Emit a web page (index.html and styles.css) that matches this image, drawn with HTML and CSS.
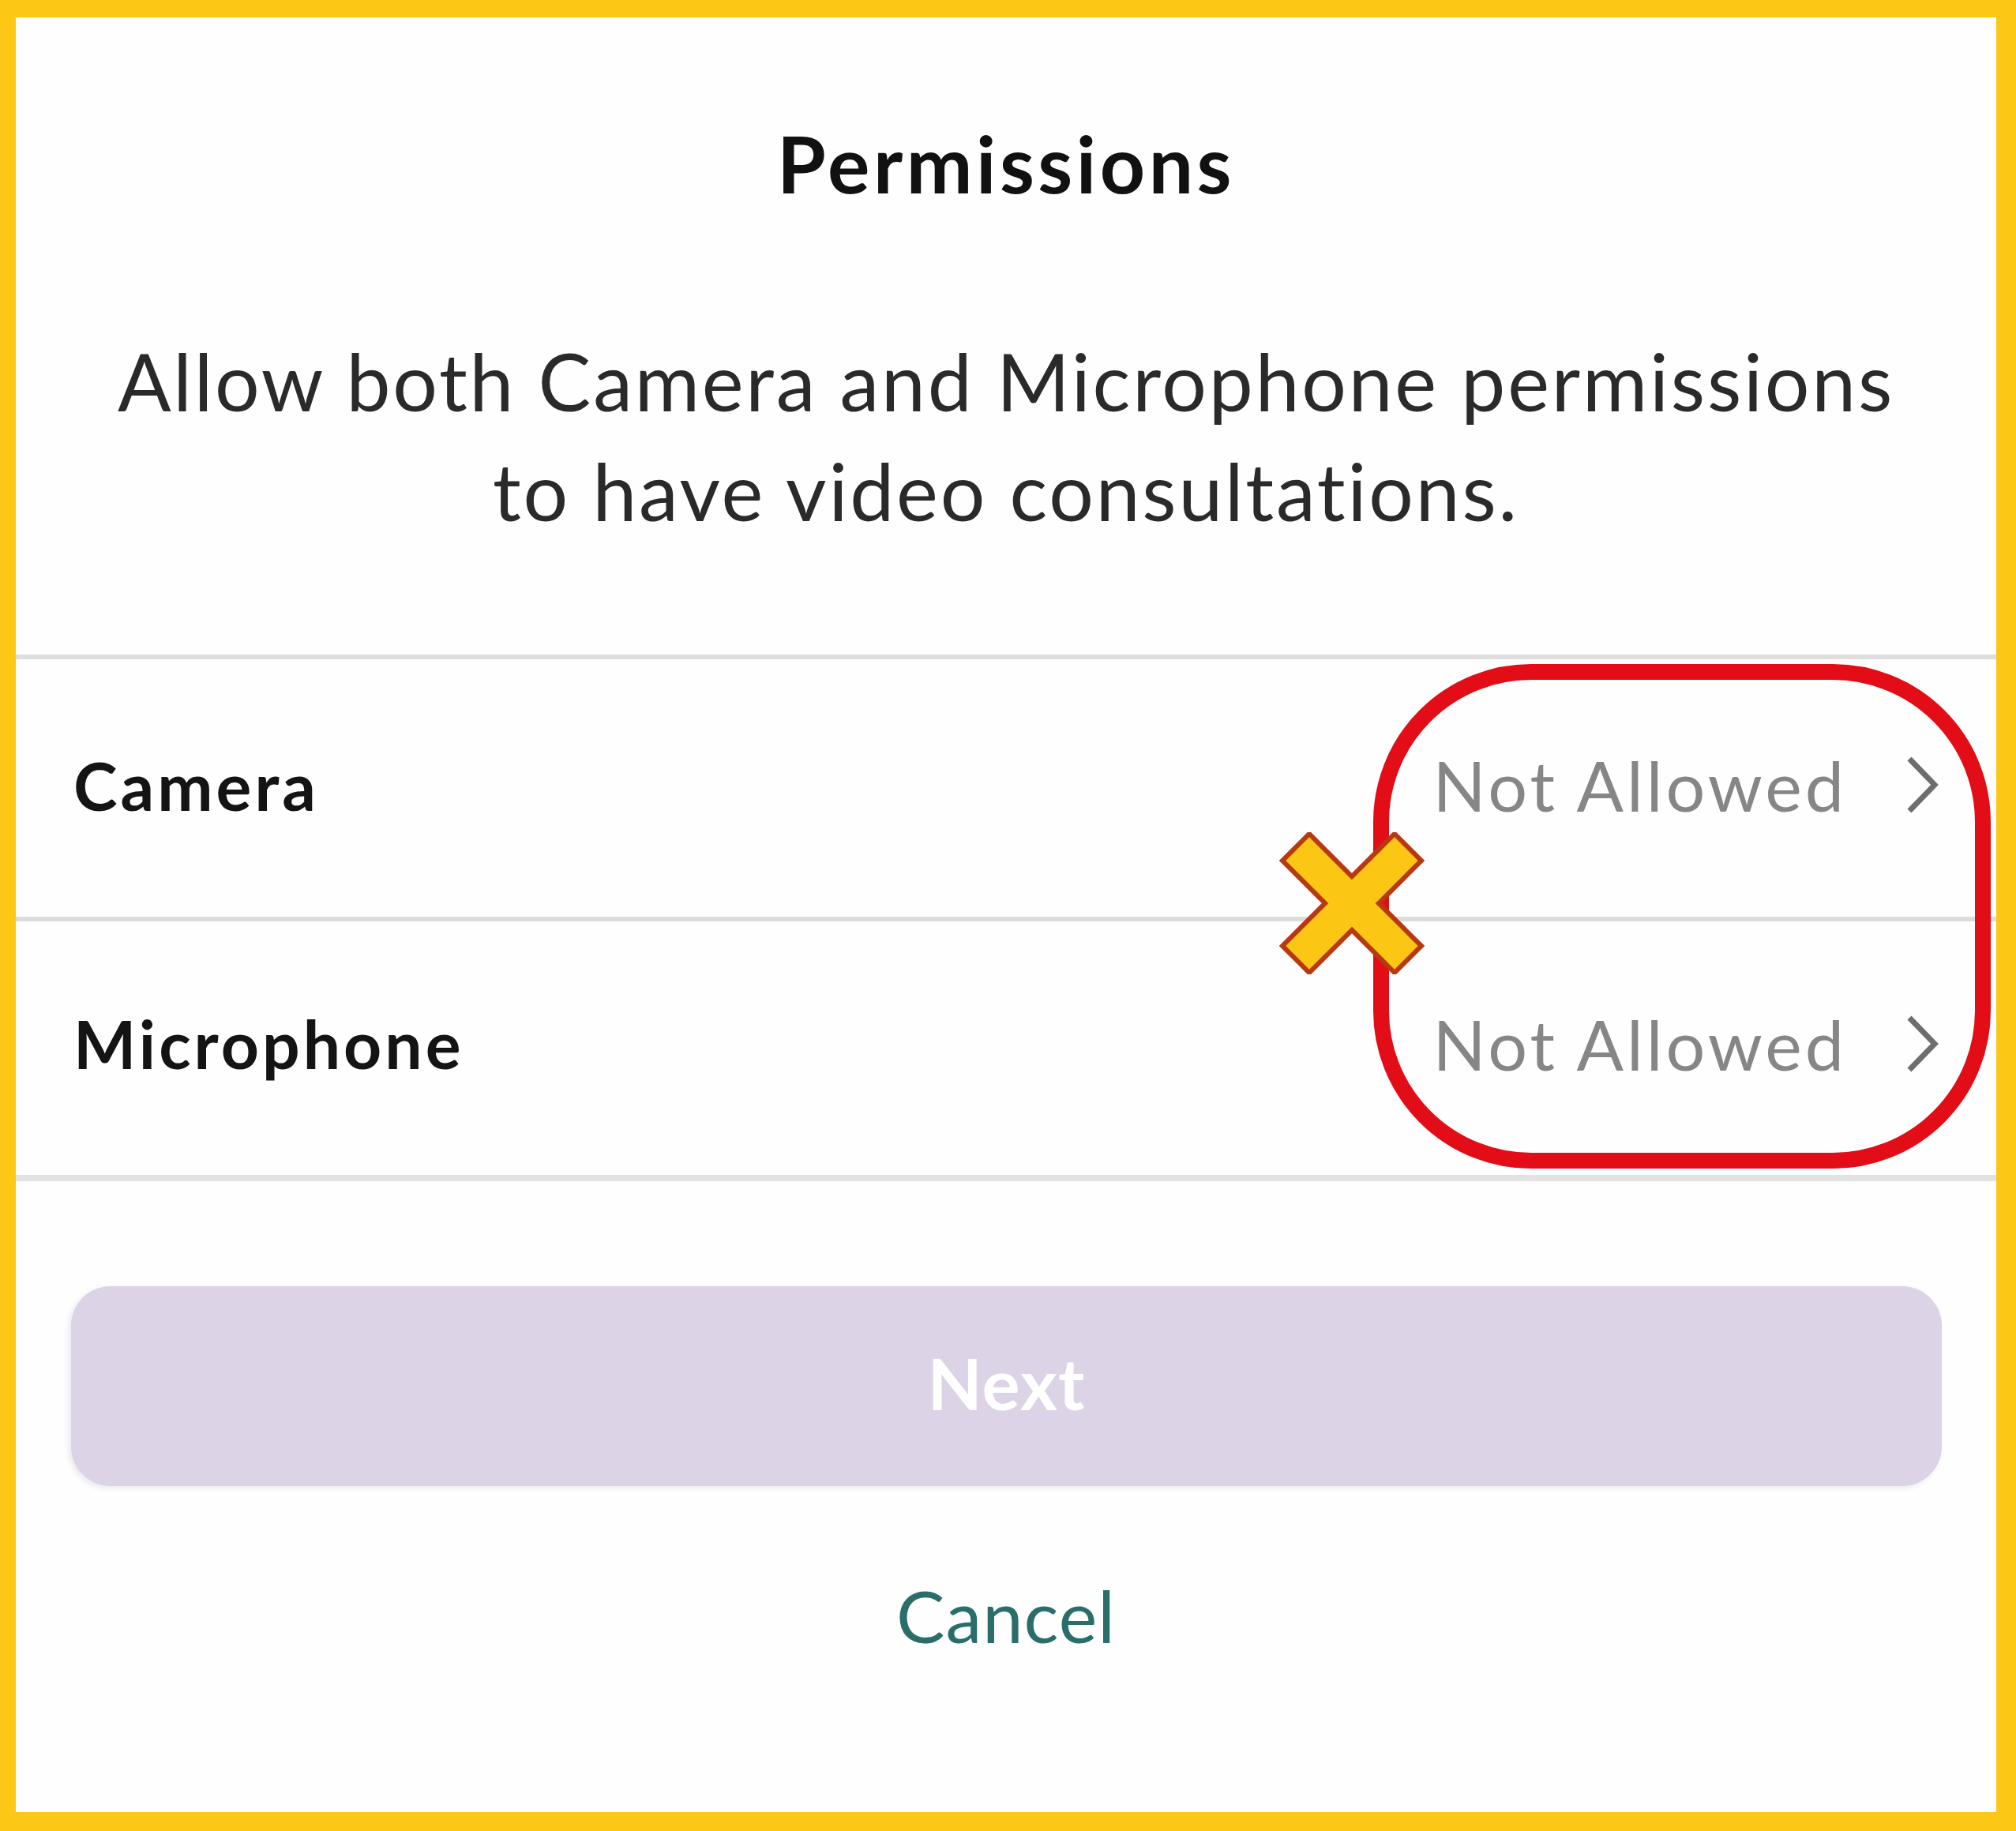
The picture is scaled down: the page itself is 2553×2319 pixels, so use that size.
FILE: index.html
```html
<!DOCTYPE html>
<html lang="en">
<head>
<meta charset="utf-8">
<title>Permissions</title>
<link rel="stylesheet" href="styles.css">
</head>
<body>
<div class="frame">
  <div class="card">
    <h1 class="title">Permissions</h1>
    <p class="desc">Allow both Camera and Microphone permissions<br>to have video consultations.</p>
    <div class="list">
      <div class="row">
        <span class="label">Camera</span>
        <span class="status">Not Allowed
          <svg class="chev" viewBox="0 0 42 76" width="42" height="76"><path d="M5 5 L37 38 L5 71" fill="none" stroke="#6e6e6e" stroke-width="7"/></svg>
        </span>
      </div>
      <div class="row">
        <span class="label">Microphone</span>
        <span class="status">Not Allowed
          <svg class="chev" viewBox="0 0 42 76" width="42" height="76"><path d="M5 5 L37 38 L5 71" fill="none" stroke="#6e6e6e" stroke-width="7"/></svg>
        </span>
      </div>
      <div class="highlight"></div>
      <svg class="xmark" viewBox="0 0 184 180" width="184" height="180">
        <path d="M38 36 L146 144 M146 36 L38 144" stroke="#b8380f" stroke-width="54" stroke-linecap="square" fill="none"/>
        <path d="M38 36 L146 144 M146 36 L38 144" stroke="#fcc614" stroke-width="42" stroke-linecap="square" fill="none"/>
      </svg>
    </div>
    <button class="next" type="button">Next</button>
    <div class="cancel">Cancel</div>
  </div>
</div>
</body>
</html>
```
FILE: styles.css
```css
html, body {
  margin: 0;
  padding: 0;
}
body {
  width: 2553px;
  height: 2319px;
  background: #fcc815;
  font-family: Lato, "Open Sans", sans-serif;
}
.frame {
  box-sizing: border-box;
  width: 2553px;
  height: 2319px;
  border-style: solid;
  border-color: #fcc815;
  border-width: 22px 25px 24px 20px;
  background: #fefefe;
}
.card {
  display: flex;
  flex-direction: column;
  align-items: stretch;
}
.title {
  margin: 124px 0 0;
  text-align: center;
  font-size: 100px;
  line-height: 120px;
  font-weight: 700;
  letter-spacing: 4.5px;
  color: #111;
}
.desc {
  margin: 147px 0 0;
  text-align: center;
  font-size: 100px;
  line-height: 139px;
  font-weight: 400;
  letter-spacing: 2.8px;
  color: #2a2a2a;
}
.list {
  position: relative;
  margin-top: 138px;
  border-top: 6px solid #dedede;
  border-bottom: 8px solid #e2e2e2;
}
.row {
  box-sizing: border-box;
  display: flex;
  align-items: center;
  justify-content: space-between;
  height: 326px;
  padding: 0 73px 8px;
}
.row + .row {
  border-top: 6px solid #dcdcdc;
  height: 327px;
  padding-bottom: 12px;
}
.label {
  font-size: 84px;
  font-weight: 700;
  letter-spacing: 4px;
  color: #141414;
}
.status {
  display: flex;
  align-items: center;
  gap: 74px;
  font-size: 88px;
  font-weight: 400;
  letter-spacing: 4px;
  color: #868686;
}
.chev {
  display: block;
}
.highlight {
  position: absolute;
  left: 1719px;
  top: 6px;
  width: 782px;
  height: 639px;
  box-sizing: border-box;
  border: 20px solid #e20d16;
  border-radius: 200px;
}
.xmark {
  position: absolute;
  left: 1600px;
  top: 219px;
}
.next {
  margin: 133px 69px 0 70px;
  height: 253px;
  padding: 0 0 10px;
  border: none;
  border-radius: 50px;
  background: #dcd3e6;
  box-shadow: -3px 3px 6px rgba(90, 80, 110, 0.12);
  color: #ffffff;
  font-family: Lato, "Open Sans", sans-serif;
  font-size: 90px;
  font-weight: 700;
  letter-spacing: 1px;
}
.cancel {
  margin-top: 104px;
  text-align: center;
  font-size: 92px;
  line-height: 120px;
  font-weight: 400;
  letter-spacing: 1px;
  color: #2a6e6c;
}
```
